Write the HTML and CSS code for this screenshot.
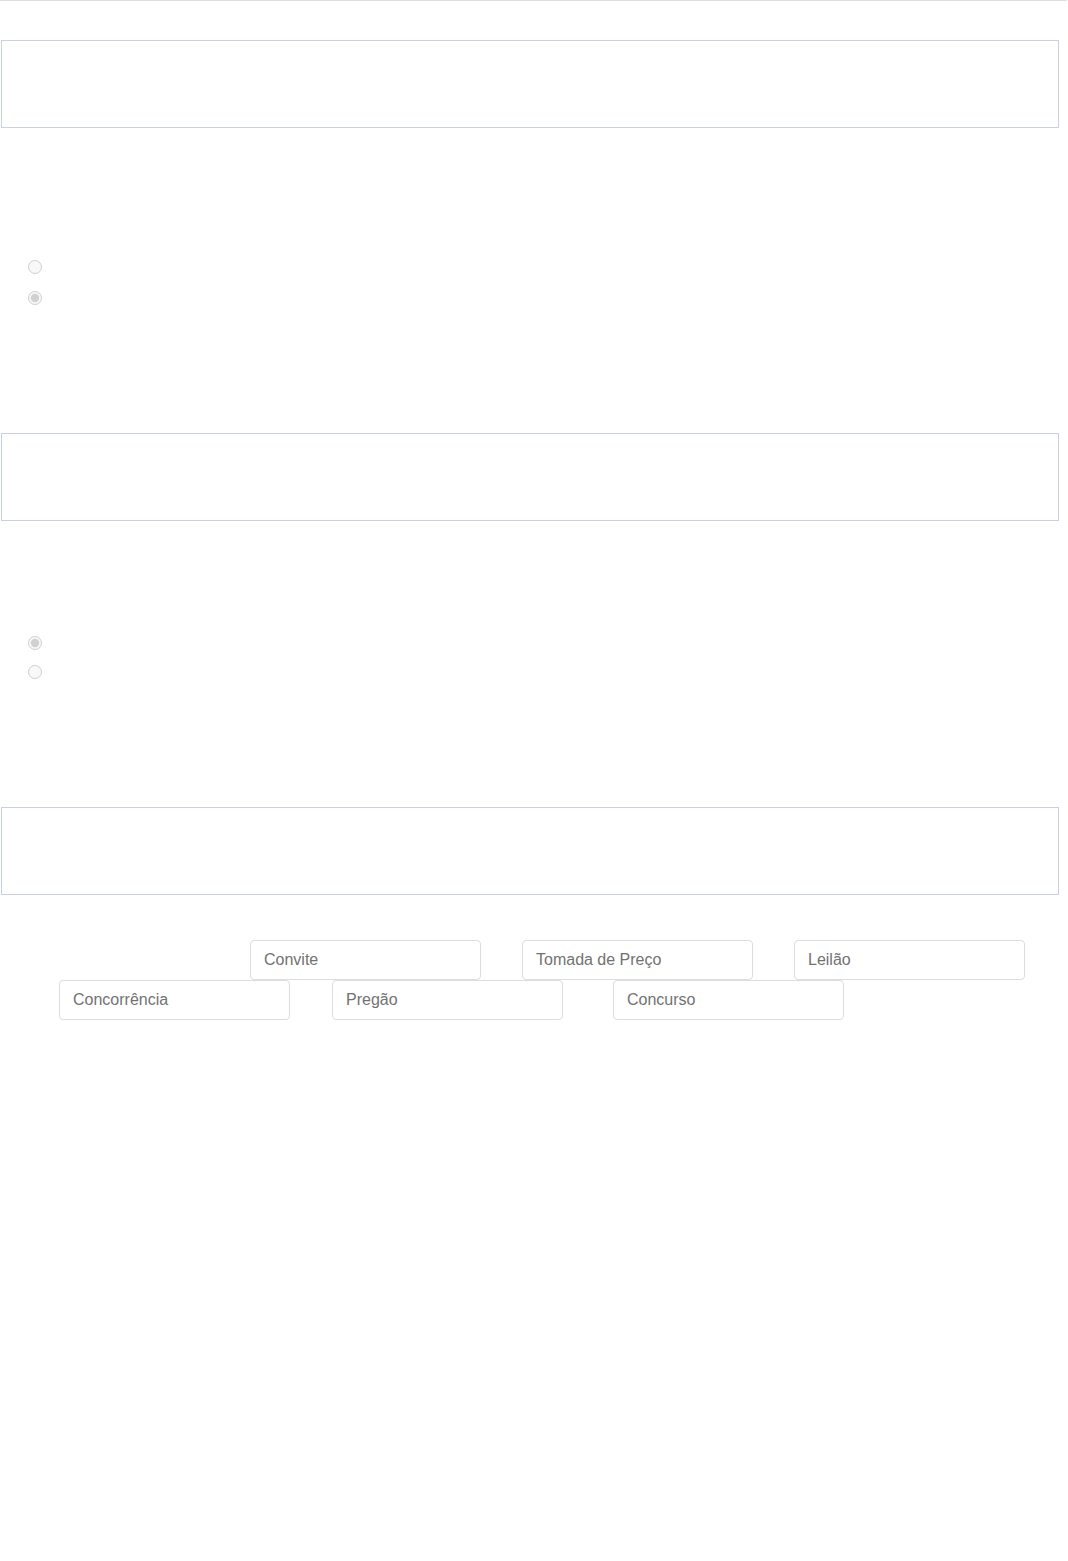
FILE: index.html
```html
<!DOCTYPE html>
<html lang="pt">
<head>
  <meta charset="UTF-8" />
  <meta name="viewport" content="width=device-width, initial-scale=1.0"/>
  <title>Questionário</title>
  <link rel="stylesheet" href="styles.css">
</head>
<body>
  <div class="rule"></div>

  <div class="answer-box"></div>

  <div class="choices first">
    <div class="choice"><input type="radio" name="q1" disabled /></div>
    <div class="choice"><input type="radio" name="q1" disabled checked /></div>
  </div>

  <div class="answer-box"></div>

  <div class="choices second">
    <div class="choice tight"><input type="radio" name="q2" disabled checked /></div>
    <div class="choice tight"><input type="radio" name="q2" disabled /></div>
  </div>

  <div class="answer-box"></div>

  <div class="drag-area">
    <div class="drag-row top">
      <div class="drag-item">Convite</div>
      <div class="drag-item">Tomada de Preço</div>
      <div class="drag-item">Leilão</div>
    </div>
    <div class="drag-row bottom">
      <div class="drag-item">Concorrência</div>
      <div class="drag-item">Pregão</div>
      <div class="drag-item wide-gap">Concurso</div>
    </div>
  </div>
</body>
</html>
```

FILE: styles.css
```css
body {
  margin: 0;
  background-color: #fff;
  font-family: "Liberation Sans", Arial, sans-serif;
  color: #666;
}
.rule {
  height: 1px;
  width: 1067px;
  background-color: #dcdee2;
}
.answer-box {
  height: 86px;
  width: 1056px;
  margin-left: 1px;
  margin-top: 39px;
  border: 1px solid #c9d0de;
}
.choices.first {
  margin-top: 132px;
  margin-bottom: 111px;
}
.choices.second {
  margin-top: 115px;
  margin-bottom: 113px;
}
.choice {
  height: 31px;
}
.choice.tight {
  height: 29px;
}
.choice input {
  display: block;
  margin: 0 0 0 28px;
  width: 14px;
  height: 14px;
}
.drag-area {
  margin-top: 45px;
}
.drag-row {
  display: flex;
  height: 40px;
}
.drag-row.top {
  padding-left: 250px;
  gap: 41px;
}
.drag-row.bottom {
  padding-left: 59px;
  gap: 42px;
}
.drag-item {
  box-sizing: border-box;
  width: 231px;
  height: 40px;
  padding-left: 13px;
  display: flex;
  align-items: center;
  font-size: 16px;
  color: #727272;
  border: 1px solid #dddddd;
  border-radius: 4px;
  background-color: #fff;
}
.drag-item.wide-gap {
  margin-left: 8px;
}
```
